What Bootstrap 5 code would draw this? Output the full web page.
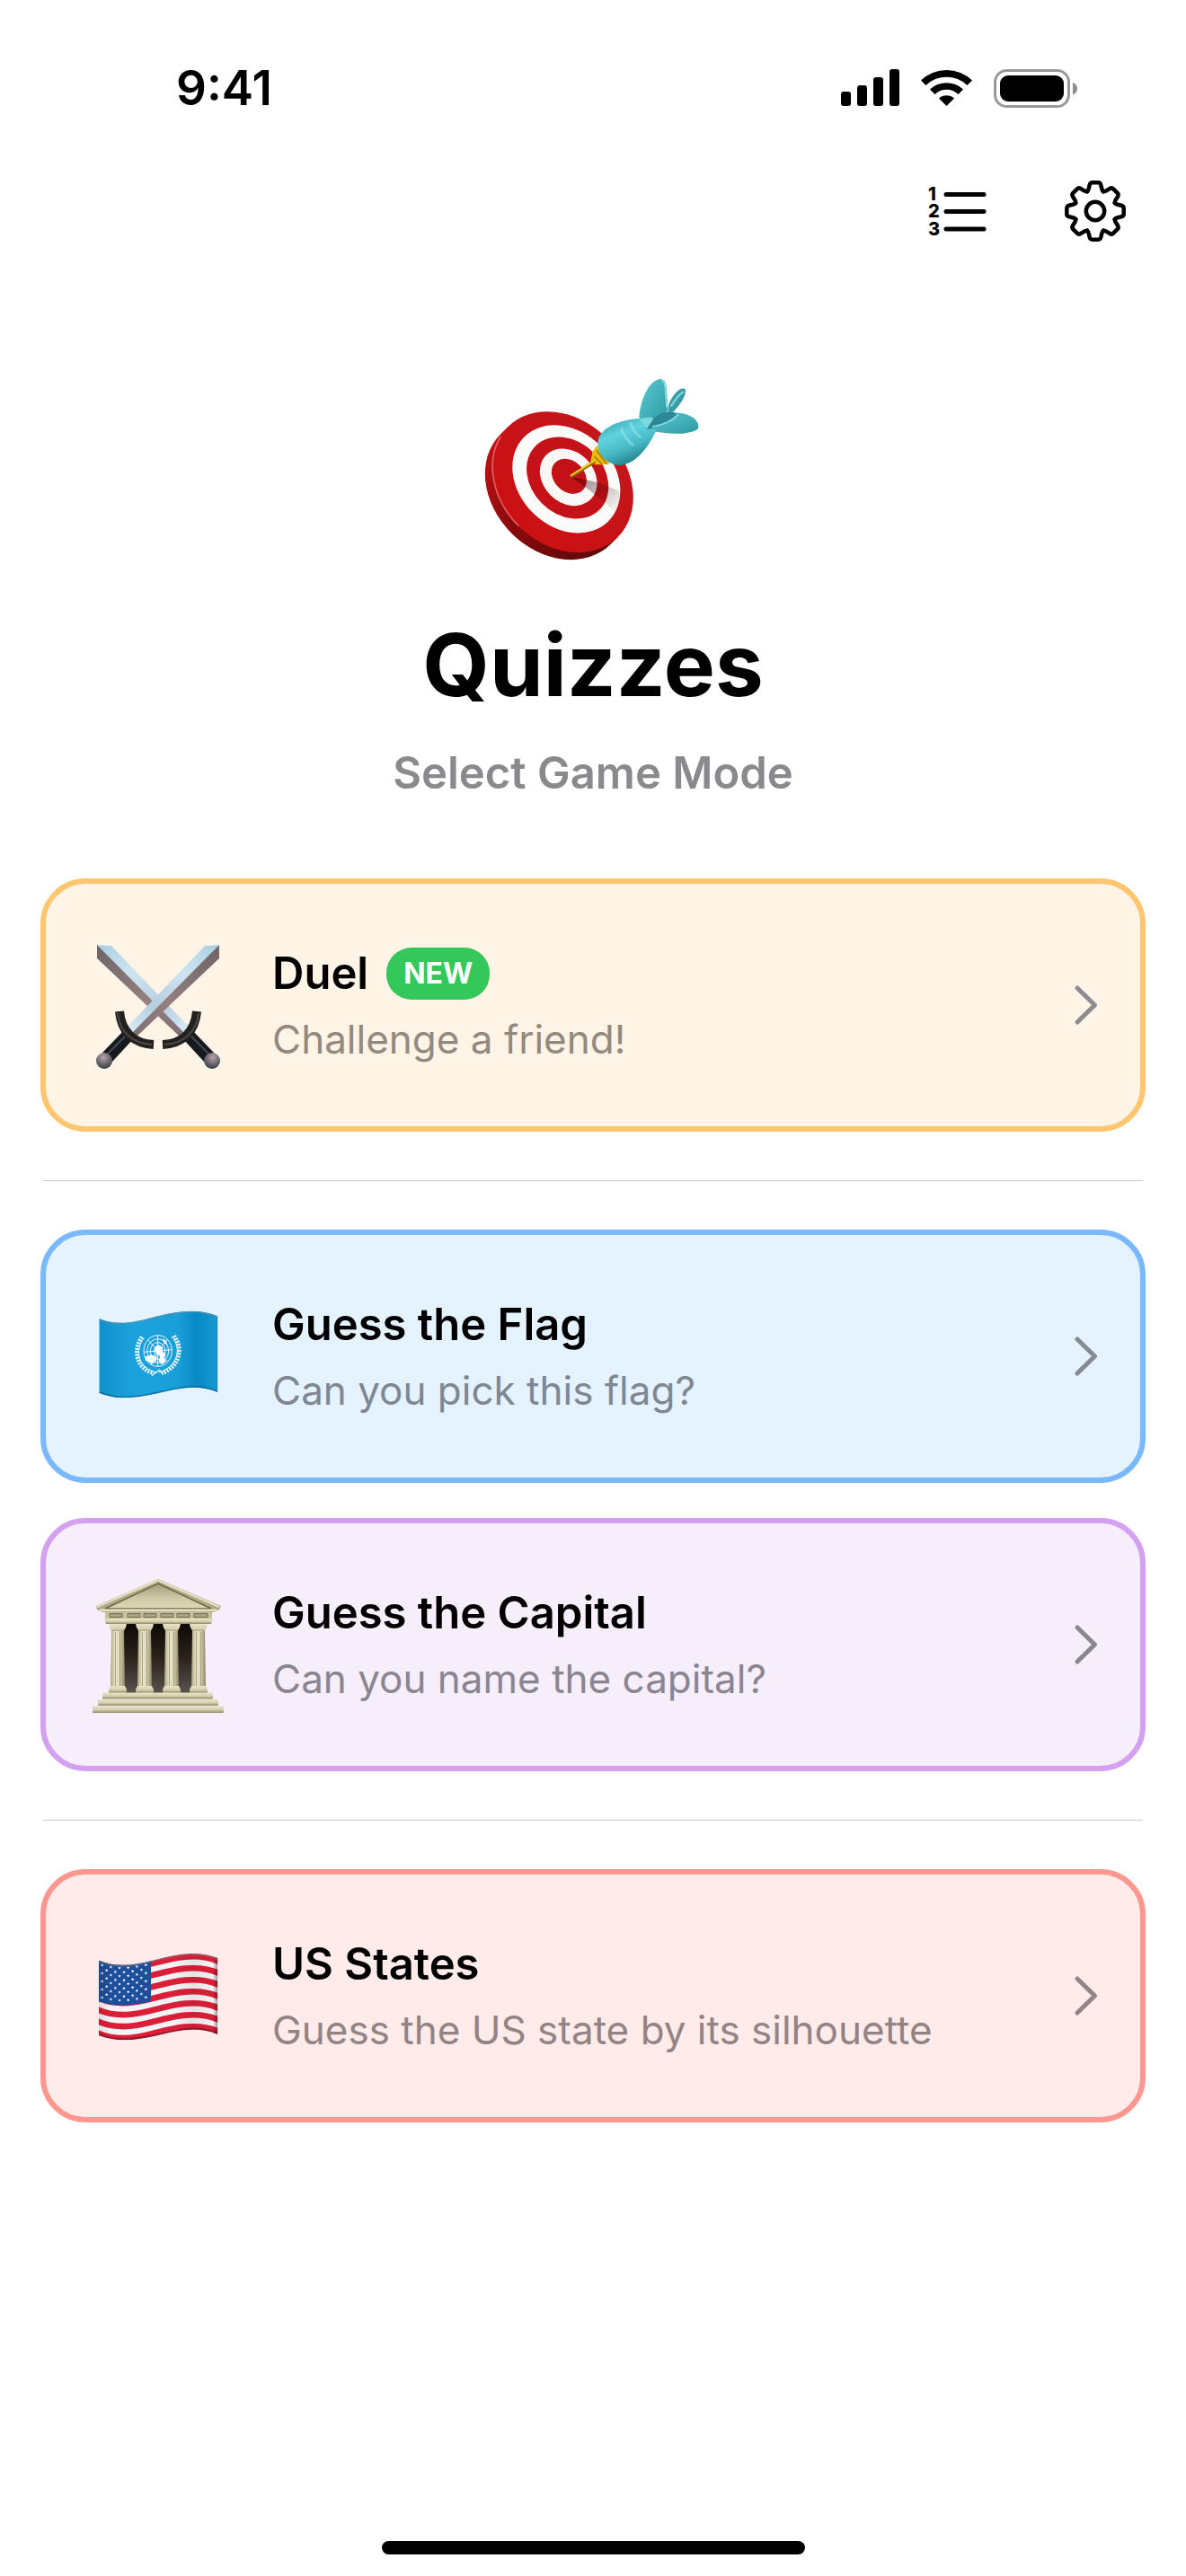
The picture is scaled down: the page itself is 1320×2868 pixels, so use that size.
<!DOCTYPE html>
<html lang="en">
<head>
<meta charset="utf-8">
<meta name="viewport" content="width=device-width, initial-scale=1">
<title>Quizzes</title>
<link href="https://cdn.jsdelivr.net/npm/bootstrap@5.3.0/dist/css/bootstrap.min.css" rel="stylesheet">
<style>
  body { font-family: Inter, "Liberation Sans", sans-serif; color: #000; background: #fff; }
  svg { display: block; flex: none; }
  .status-bar { padding: 68px 120px 8px 196px; }
  .clock { font-size: 53px; line-height: 60px; font-weight: 600; }
  .status-icons { gap: 24px; }
  .toolbar { padding: 61px 63px 6px 60px; gap: 78px; }
  .tool { background: none; border: 0; padding: 4px; color: #000; }
  .hero { padding-top: 121px; }
  .hero h1 { font-size: 96px; line-height: 120px; font-weight: 700; margin: 40px 0 31px; }
  .hero p { font-size: 49px; line-height: 60px; font-weight: 600; color: #8a8a8e; margin: 0; }
  .modes { padding: 87px 45px 0; }
  .mode { padding: 58px 46px 58px 48px; gap: 50px; border: 6px solid; border-radius: 50px; color: #000; }
  .mode + .mode { margin-top: 39px; }
  .mode-body { gap: 16px; }
  .mode h2 { font-size: 49px; line-height: 60px; font-weight: 600; margin: 0; }
  .mode p { font-size: 44px; line-height: 54px; margin: 0; }
  .title-row { gap: 20px; }
  .rule { border: 0; border-top: 1px solid #c6c6c8; opacity: 1; margin: 54px 3px; }
  .pill { background: #34c759; color: #fff; font-size: 32px; line-height: 58px; font-weight: 700; border-radius: 28px; padding: 0 19px; }
  .mode-orange { background: #fff4e6; border-color: #ffc670; } .mode-orange p { color: #94897f; }
  .mode-blue { background: #e5f2ff; border-color: #7ab8ff; } .mode-blue p { color: #7f8892; }
  .mode-purple { background: #f6eefb; border-color: #d4a1f0; } .mode-purple p { color: #8b8592; }
  .mode-red { background: #ffebea; border-color: #ff9791; } .mode-red p { color: #938384; }
  .home-bar { width: 36%; max-width: 471px; height: 15px; border-radius: 8px; background: #000; margin-bottom: 24px; }
</style>
</head>
<body>
<div class="d-flex flex-column min-vh-100">
  <header>
    <div class="status-bar d-flex align-items-center justify-content-between">
      <span class="clock">9:41</span>
      <div class="status-icons d-flex align-items-center">
        <svg width="65" height="42" viewBox="0 0 65 42" role="img" aria-label="Signal"><rect y="25" width="11" height="16" rx="3"/><rect x="18" y="18" width="11" height="23" rx="3"/><rect x="36" y="9" width="11" height="32" rx="3"/><rect x="54" width="11" height="41" rx="3"/></svg>
        <svg width="57" height="42" viewBox="0 0 57 42" role="img" aria-label="Wi-Fi"><path d="M0 12.500A41 41 0 0 1 57 12.500L51.500 18A33 33 0 0 0 5.500 18ZM10 22.500A27 27 0 0 1 47 22.500L41.500 28A19 19 0 0 0 15.500 28ZM20 32.500A13 13 0 0 1 37 32.500L28.500 41Z"/></svg>
        <svg width="94" height="43" viewBox="0 0 94 43" role="img" aria-label="Battery"><rect x="1.500" y="1.500" width="82" height="40" rx="13" fill="none" stroke="#999" stroke-width="3"/><rect x="7" y="7" width="71" height="29" rx="9"/><path d="M88 15Q93 17 93 21.500T88 28.500Z" fill="#8c8c8c"/></svg>
      </div>
    </div>
    <div class="toolbar d-flex align-items-center justify-content-end">
      <button class="tool" type="button" aria-label="Leaderboard">
        <svg width="66" height="68" viewBox="0 0 66 68"><path d="M20 15.500H62M20 34.500H62M20 54H62" stroke="#000" stroke-width="5" stroke-linecap="round"/><g font-family="Inter, sans-serif" font-weight="800" font-size="20"><text x="0" y="22">1</text><text x="0" y="41">2</text><text x="0" y="61">3</text></g></svg>
      </button>
      <button class="tool" type="button" aria-label="Settings">
        <svg width="68" height="68" viewBox="-34 -34 68 68" fill="none" stroke="#000" stroke-width="4.500" stroke-linecap="round" stroke-linejoin="round">
          <defs><path id="tooth" d="M-9-21.700Q-7.500-23-7-26L-6.300-29Q-5.600-31.700-3.200-31.700H3.200Q5.600-31.700 6.300-29L7-26Q7.500-23 9-21.700"/></defs>
          <use href="#tooth"/><use href="#tooth" transform="rotate(45)"/><use href="#tooth" transform="rotate(90)"/><use href="#tooth" transform="rotate(135)"/><use href="#tooth" transform="rotate(180)"/><use href="#tooth" transform="rotate(225)"/><use href="#tooth" transform="rotate(270)"/><use href="#tooth" transform="rotate(315)"/>
          <circle r="10.200"/>
        </svg>
      </button>
    </div>
  </header>

  <main>
    <section class="hero d-flex flex-column align-items-center text-center">
      <svg width="280" height="240" viewBox="0 0 840 720" role="img" aria-label="Dartboard">
        <defs>
          <linearGradient id="side" x1="0" x2="1"><stop offset="0" stop-color="#c01014"/><stop offset=".45" stop-color="#8c0a0c"/><stop offset="1" stop-color="#5e0808"/></linearGradient>
          <linearGradient id="face" x1="0" y1="0" x2="0" y2="1"><stop offset="0" stop-color="#c3161b"/><stop offset="1" stop-color="#cc1013"/></linearGradient>
          <linearGradient id="dart" x1=".2" y1="0" x2=".7" y2="1"><stop offset="0" stop-color="#37a3ad"/><stop offset=".35" stop-color="#5fd3de"/><stop offset=".65" stop-color="#45b5c2"/><stop offset="1" stop-color="#1b707c"/></linearGradient>
          <linearGradient id="fin" x1="0" y1="0" x2="1" y2="1"><stop offset="0" stop-color="#5bcbd2"/><stop offset="1" stop-color="#2d98a3"/></linearGradient>
          <linearGradient id="shade" x1="0" y1="0" x2="1" y2=".8"><stop offset="0" stop-color="#300" stop-opacity=".5"/><stop offset="1" stop-color="#300" stop-opacity=".04"/></linearGradient>
        </defs>
        <g transform="translate(319 410) rotate(45)">
          <path d="M-260 0V34A260 208 0 0 0 260 34V0Z" fill="url(#side)"/>
          <ellipse rx="260" ry="208" fill="url(#face)"/>
          <path d="M-254 40A260 208 0 0 0 0 208" fill="none" stroke="#ee7b78" stroke-width="5" opacity=".75"/>
        </g>
        <ellipse rx="199" ry="159" transform="translate(331 400) rotate(45)" fill="#fbfbfa"/>
        <ellipse rx="151" ry="121" transform="translate(335 396) rotate(45)" fill="#c51218"/>
        <ellipse rx="105" ry="85" transform="translate(338 394) rotate(45)" fill="#f8f8f7"/>
        <ellipse rx="65" ry="51" transform="translate(340 391) rotate(45)" fill="#c41118"/>
        <path d="M346 392L432 410L508 440Q512 478 496 510Q430 450 346 392Z" fill="url(#shade)"/>
        <path d="M412 342L418 310L432 288L476 350L448 352L425 352Z" fill="#eebd0b"/>
        <path d="M424 324L450 350M432 304L466 350M418 340L428 350" stroke="#a87a00" stroke-width="5"/>
        <path d="M348 390L422 344" stroke="#927000" stroke-width="11" stroke-linecap="round"/><path d="M348 387L422 340" stroke="#f5cf18" stroke-width="6" stroke-linecap="round"/>
        <path d="M672 152C688 112 716 88 729 101C732 125 704 158 690 174L670 178Z" fill="#3a9da6"/><path d="M680 158Q704 118 723 108" stroke="#78d5da" stroke-width="7" fill="none"/>
        <path d="M574 196C578 128 612 66 646 66C668 68 666 92 670 170L618 212Z" fill="url(#fin)"/>
        <path d="M648 69C662 72 662 92 666 160" stroke="#8be2e5" stroke-width="5" fill="none"/>
        <path d="M608 238C650 196 690 172 716 180C760 190 777 212 771 232C748 254 670 252 608 238Z" fill="url(#fin)"/>
        <path d="M436 290C432 242 476 216 540 202L616 192L630 240C602 300 560 350 510 354C470 352 440 324 436 290Z" fill="url(#dart)"/>
        <path d="M514 230Q526 266 556 288M544 210Q556 246 580 262" stroke="#91e6eb" stroke-width="9" fill="none" opacity=".6"/>
        <path d="M598 234C616 192 654 170 690 176Q708 182 698 194C670 220 640 228 598 234Z" fill="#2b8894"/>
        <path d="M576 202Q605 190 622 198L600 232Z" fill="#7ed9df"/>
        <path d="M618 226Q680 214 704 184" stroke="#7bdce2" stroke-width="6" fill="none"/>
      </svg>
      <h1>Quizzes</h1>
      <p>Select Game Mode</p>
    </section>

    <nav class="modes" aria-label="Game modes">
      <a href="#duel" class="mode mode-orange d-flex align-items-center text-decoration-none">
        <svg width="154" height="154" viewBox="-7 -9 154 154" aria-hidden="true">
          <defs>
            <linearGradient id="steel" x1="0" y1="0" x2="1" y2="1"><stop offset="0" stop-color="#a9cfe0"/><stop offset=".35" stop-color="#cfe4f1"/><stop offset=".7" stop-color="#b5cddd"/><stop offset="1" stop-color="#dceefa"/></linearGradient>
            <linearGradient id="edge" x1="0" y1="0" x2="1" y2="1"><stop offset="0" stop-color="#6f6468"/><stop offset=".6" stop-color="#94807f"/><stop offset="1" stop-color="#7c6d72"/></linearGradient>
            <radialGradient id="knob" cx=".55" cy=".3" r=".7"><stop offset="0" stop-color="#b9a5a9"/><stop offset=".6" stop-color="#6b656d"/><stop offset="1" stop-color="#34404a"/></radialGradient>
            <g id="sword">
              <path d="M2 1L2 16L95 104L103 94Z" fill="url(#edge)"/>
              <path d="M2 1L18 2L104 92L100 100Z" fill="url(#steel)"/>
              <path d="M97 105L107 95L132 121L121 131Z" fill="#16191e"/><path d="M105 101L127 123" stroke="#454b53" stroke-width="2"/>
              <path d="M113 75C111 98 97 111 75 112" fill="none" stroke="#23211f" stroke-width="10"/>
              <path d="M115 77C113 98 98 111 77 112" fill="none" stroke="#4c4a47" stroke-width="2"/>
              <circle cx="130" cy="130" r="9" fill="url(#knob)"/>
            </g>
          </defs>
          <use href="#sword"/><use href="#sword" transform="translate(140) scale(-1 1)"/>
        </svg>
        <div class="mode-body d-flex flex-column flex-grow-1">
          <div class="title-row d-flex align-items-center"><h2>Duel</h2><span class="pill">NEW</span></div>
          <p>Challenge a friend!</p>
        </div>
        <svg width="28" height="46" viewBox="0 0 28 46" aria-hidden="true"><path d="M4 4L23.500 23L4 42" fill="none" stroke="#8e8a90" stroke-width="5" stroke-linecap="round" stroke-linejoin="round"/></svg>
      </a>

      <hr class="rule">

      <a href="#flag" class="mode mode-blue d-flex align-items-center text-decoration-none">
        <svg width="154" height="154" viewBox="27 -21 462 462" aria-hidden="true">
          <defs>
            <linearGradient id="unblue" x1="0" x2="1"><stop offset="0" stop-color="#118fc9"/><stop offset=".3" stop-color="#1ba2dc"/><stop offset=".65" stop-color="#1a9fd9"/><stop offset=".8" stop-color="#0789c4"/><stop offset=".95" stop-color="#1597cf"/><stop offset="1" stop-color="#0b6f9d"/></linearGradient>
            <clipPath id="unclip"><path d="M61 84C125 111 185 94 240 80S380 43 457 76V330C380 297 300 325 240 337S125 358 61 332Z"/></clipPath>
          </defs>
          <g clip-path="url(#unclip)">
            <path d="M50 30H470V370H50Z" fill="url(#unblue)"/>
            <path d="M61 84C125 111 185 94 240 80S380 43 457 76" fill="none" stroke="#5c8fa6" stroke-width="10" opacity=".65"/>
            <path d="M61 332C125 358 180 349 240 337S380 297 457 330" fill="none" stroke="#07577f" stroke-width="9" opacity=".65"/>
          </g>
          <g fill="none" stroke="#eef8ff" stroke-width="3">
            <ellipse cx="257" cy="192" rx="47" ry="52"/><ellipse cx="257" cy="192" rx="36" ry="40"/><ellipse cx="257" cy="192" rx="25" ry="28"/><ellipse cx="257" cy="192" rx="13" ry="15"/>
            <path d="M257 140V244M210 196L304 188M224 155L290 229M290 153L224 231"/>
          </g>
          <path d="M246 180l12-8 16 8-2 14 12 8-4 12-14 2-6-12-8-2-4-10ZM214 212l18-7 22 6-2 14-16 12-8-10-12-3ZM264 214l14 2 6 12-14 10-10-12ZM272 150l12 8 6 16-12-8Z" fill="#fff"/>
          <g fill="none" stroke="#eef8ff">
            <path d="M211 148C179 190 190 250 254 264M303 144C340 184 322 245 260 264" stroke-width="3"/>
            <path d="M204 146C172 190 186 254 244 266M311 142C344 184 328 248 270 266" stroke-width="14" stroke-dasharray="6 4"/>
            <path d="M236 275L262 256L276 270" stroke-width="4"/>
          </g>
        </svg>
        <div class="mode-body d-flex flex-column flex-grow-1">
          <h2>Guess the Flag</h2>
          <p>Can you pick this flag?</p>
        </div>
        <svg width="28" height="46" viewBox="0 0 28 46" aria-hidden="true"><path d="M4 4L23.500 23L4 42" fill="none" stroke="#858a93" stroke-width="5" stroke-linecap="round" stroke-linejoin="round"/></svg>
      </a>

      <a href="#capital" class="mode mode-purple d-flex align-items-center text-decoration-none">
        <svg width="154" height="154" viewBox="0 0 154 154" aria-hidden="true">
          <defs>
            <linearGradient id="stone" x1="0" y1="0" x2="0" y2="1"><stop offset="0" stop-color="#e9e3c9"/><stop offset=".55" stop-color="#d6cfae"/><stop offset="1" stop-color="#8d8764"/></linearGradient>
            <linearGradient id="shaft" x1="0" x2="1"><stop offset="0" stop-color="#aaa380"/><stop offset=".35" stop-color="#eee8d0"/><stop offset=".65" stop-color="#d8d1b3"/><stop offset="1" stop-color="#8b8362"/></linearGradient>
            <linearGradient id="dark" x1="0" y1="0" x2="0" y2="1"><stop offset="0" stop-color="#0d0905"/><stop offset=".5" stop-color="#2b231c"/><stop offset="1" stop-color="#5a524d"/></linearGradient>
            <linearGradient id="gable" x1="0" y1="0" x2="0" y2="1"><stop offset="0" stop-color="#a39c7b"/><stop offset=".6" stop-color="#d0c9a9"/><stop offset="1" stop-color="#ddd6b8"/></linearGradient>
            <g id="column"><path d="M-10 54H10L9 58Q7 60 7 64H-7Q-7 60-9 58Z" fill="url(#stone)"/><path d="M-7 62H7L8 126H-8Z" fill="url(#shaft)"/><path d="M-2.500 63V125M2.500 63V125" stroke="#aaa27e" stroke-width="1"/><path d="M-8 123H8L10 127V131H-10V127Z" fill="url(#stone)"/></g>
          </defs>
          <path d="M38 54H116V131H38Z" fill="url(#dark)"/>
          <path d="M77 4L147 34L145 38L139 41H15L9 38L8 34Z" fill="#b0a986"/>
          <path d="M77 5.500L145 35M77 5.500L9 35" stroke="#e8e2c5" stroke-width="2"/>
          <path d="M77 9L136 37H18Z" fill="url(#gable)" stroke="#6d6747" stroke-width="1.500"/>
          <path d="M12 37.500H142V40H12Z" fill="#e5dfc4"/>
          <path d="M18 41H137V48H18Z" fill="#c8c19f"/>
          <path d="M23 42.500h14v4h-14zM43 42.500h14v4h-14zM61 42.500h14v4h-14zM80 42.500h14v4h-14zM98 42.500h14v4h-14zM117 42.500h15v4h-15z" fill="#aaa280" stroke="#746d4d"/>
          <path d="M17 48H138L136 54H19Z" fill="url(#stone)"/>
          <use href="#column" x="32"/><use href="#column" x="62"/><use href="#column" x="92"/><use href="#column" x="122"/>
          <rect x="15" y="130.500" width="123" height="7" rx="1" fill="url(#stone)"/><rect x="10" y="138" width="134" height="7" rx="1" fill="url(#stone)"/><rect x="4" y="145.500" width="146" height="7.500" rx="1" fill="url(#stone)"/>
        </svg>
        <div class="mode-body d-flex flex-column flex-grow-1">
          <h2>Guess the Capital</h2>
          <p>Can you name the capital?</p>
        </div>
        <svg width="28" height="46" viewBox="0 0 28 46" aria-hidden="true"><path d="M4 4L23.500 23L4 42" fill="none" stroke="#8b8592" stroke-width="5" stroke-linecap="round" stroke-linejoin="round"/></svg>
      </a>

      <hr class="rule">

      <a href="#states" class="mode mode-red d-flex align-items-center text-decoration-none">
        <svg width="154" height="154" viewBox="27 -45 462 462" aria-hidden="true">
          <defs>
            <clipPath id="usclip"><path d="M60 68C125 94 185 82 240 68S380 28 457 60V315C380 282 300 310 240 322S125 343 60 318Z"/></clipPath>
            <path id="wave" d="M40 58L60 68C125 94 185 82 240 68S380 28 457 60L477 70" fill="none" stroke="#dc1f39" stroke-width="20"/>
            <linearGradient id="fold" x1="0" x2="1"><stop offset="0" stop-color="#000" stop-opacity=".12"/><stop offset=".12" stop-color="#000" stop-opacity="0"/><stop offset=".65" stop-color="#000" stop-opacity="0"/><stop offset=".8" stop-color="#000" stop-opacity=".07"/><stop offset=".96" stop-color="#000" stop-opacity="0"/><stop offset="1" stop-color="#000" stop-opacity=".4"/></linearGradient>
            <path id="star" d="M0-5.500L1.500-1.800 5.500-1.700 2.400.8 3.500 4.600 0 2.400-3.500 4.600-2.400.8-5.500-1.700-1.500-1.800Z"/>
            <g id="four"><use href="#star"/><use href="#star" y="27"/><use href="#star" y="54"/><use href="#star" y="81"/></g>
            <g id="five"><use href="#four"/><use href="#star" y="108"/></g>
          </defs>
          <g clip-path="url(#usclip)">
            <path d="M50 20H470V360H50Z" fill="#f5f3f3"/>
            <use href="#wave" y="10"/><use href="#wave" y="49"/><use href="#wave" y="88"/><use href="#wave" y="127"/><use href="#wave" y="166"/><use href="#wave" y="205"/><use href="#wave" y="244"/>
            <path d="M60 60H234V205C180 217 125 228 60 205Z" fill="#1d4f9c"/>
            <g fill="#fff"><use href="#five" x="71" y="84"/><use href="#five" x="100" y="90"/><use href="#five" x="129" y="93"/><use href="#five" x="158" y="92"/><use href="#five" x="187" y="88"/><use href="#five" x="217" y="83"/><use href="#four" x="86" y="101"/><use href="#four" x="115" y="106"/><use href="#four" x="144" y="107"/><use href="#four" x="173" y="104"/><use href="#four" x="202" y="99"/></g>
            <path d="M50 20H457V360H50Z" fill="url(#fold)"/>
            <path d="M60 68C125 94 185 82 240 68S380 28 457 60" fill="none" stroke="#777" stroke-width="12" opacity=".5"/>
            <path d="M60 318C125 343 180 334 240 322S380 282 457 315" fill="none" stroke="#50101c" stroke-width="12" opacity=".55"/>
          </g>
        </svg>
        <div class="mode-body d-flex flex-column flex-grow-1">
          <h2>US States</h2>
          <p>Guess the US state by its silhouette</p>
        </div>
        <svg width="28" height="46" viewBox="0 0 28 46" aria-hidden="true"><path d="M4 4L23.500 23L4 42" fill="none" stroke="#938488" stroke-width="5" stroke-linecap="round" stroke-linejoin="round"/></svg>
      </a>
    </nav>
  </main>

  <div class="home-bar mt-auto mx-auto"></div>
</div>
<script src="https://cdn.jsdelivr.net/npm/bootstrap@5.3.0/dist/js/bootstrap.bundle.min.js"></script>
</body>
</html>
